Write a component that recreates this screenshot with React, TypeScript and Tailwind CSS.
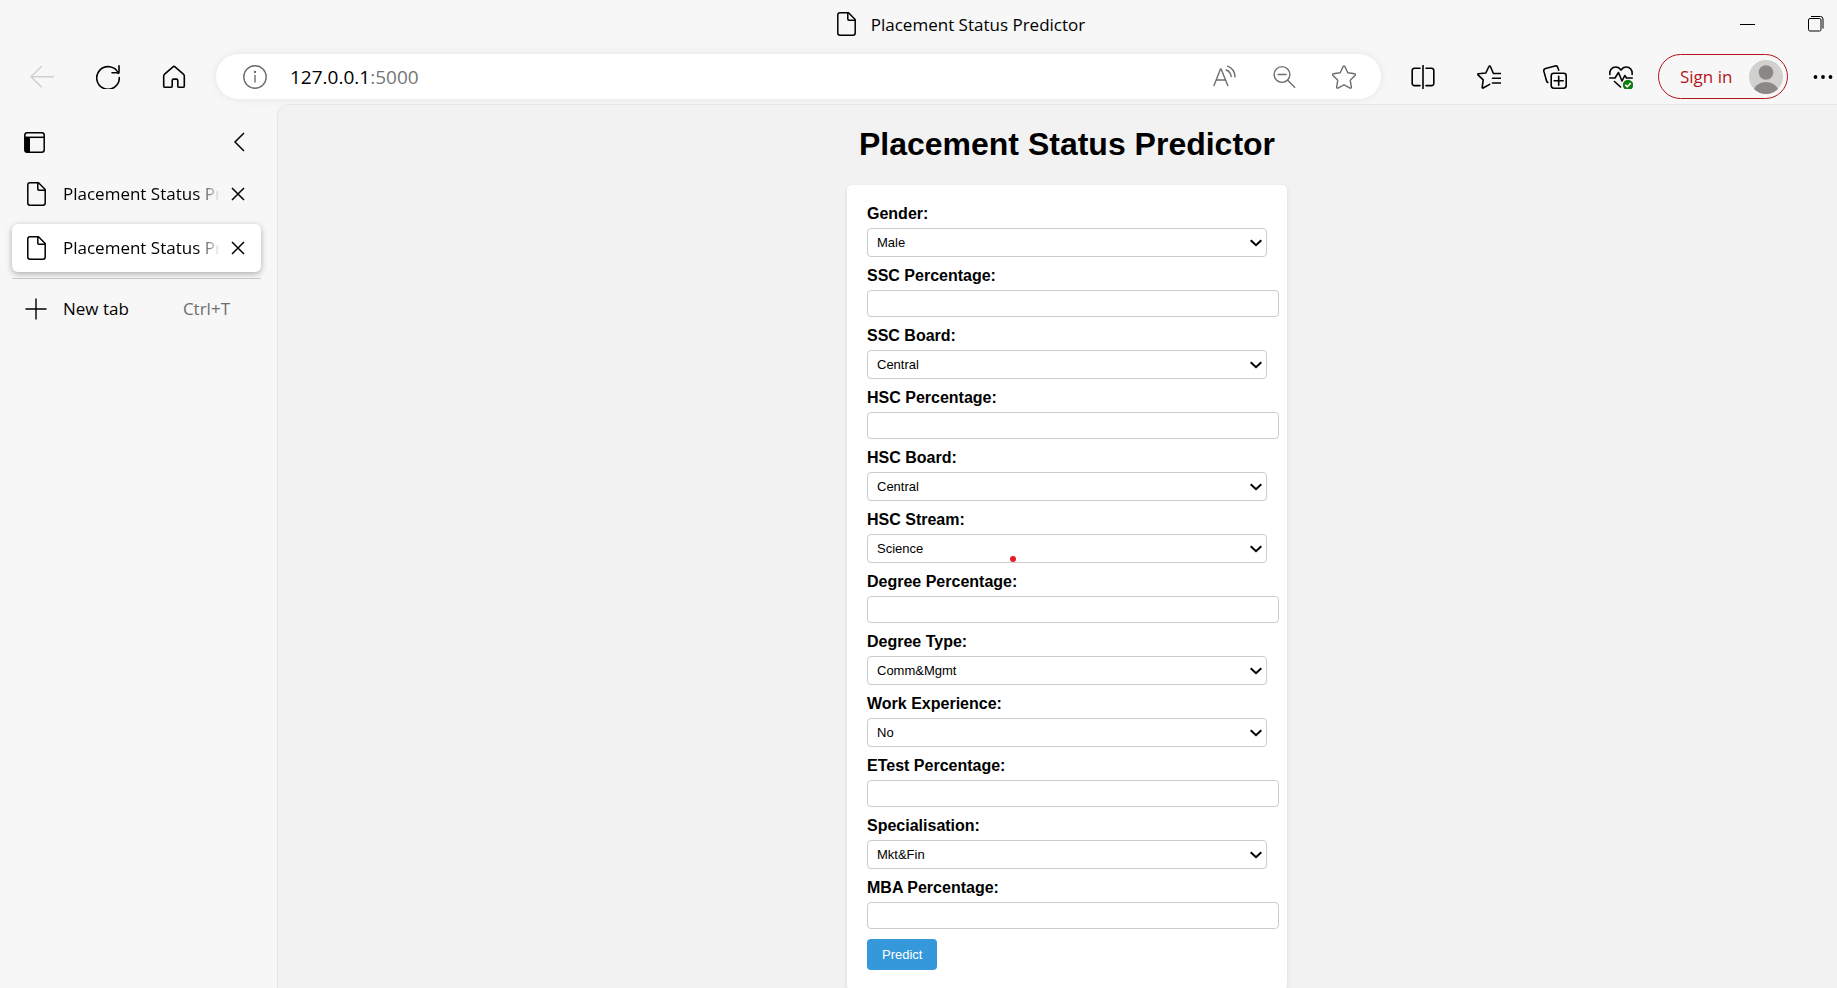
import React from "react";

type Field =
  | { kind: "select"; id: string; label: string; options: string[] }
  | { kind: "number"; id: string; label: string };

const fields: Field[] = [
  { kind: "select", id: "gender", label: "Gender:", options: ["Male", "Female"] },
  { kind: "number", id: "ssc_p", label: "SSC Percentage:" },
  { kind: "select", id: "ssc_b", label: "SSC Board:", options: ["Central", "Others"] },
  { kind: "number", id: "hsc_p", label: "HSC Percentage:" },
  { kind: "select", id: "hsc_b", label: "HSC Board:", options: ["Central", "Others"] },
  { kind: "select", id: "hsc_s", label: "HSC Stream:", options: ["Science", "Commerce", "Arts"] },
  { kind: "number", id: "degree_p", label: "Degree Percentage:" },
  { kind: "select", id: "degree_t", label: "Degree Type:", options: ["Comm&Mgmt", "Sci&Tech", "Others"] },
  { kind: "select", id: "workex", label: "Work Experience:", options: ["No", "Yes"] },
  { kind: "number", id: "etest_p", label: "ETest Percentage:" },
  { kind: "select", id: "specialisation", label: "Specialisation:", options: ["Mkt&Fin", "Mkt&HR"] },
  { kind: "number", id: "mba_p", label: "MBA Percentage:" },
];

function Icon({
  children,
  className = "h-6 w-6",
  width = 1.4,
}: {
  children: React.ReactNode;
  className?: string;
  width?: number;
}) {
  return (
    <svg
      viewBox="0 0 24 24"
      className={className}
      fill="none"
      stroke="currentColor"
      strokeWidth={width}
      strokeLinecap="round"
      strokeLinejoin="round"
      aria-hidden="true"
    >
      {children}
    </svg>
  );
}

function PageIcon() {
  return (
    <svg
      viewBox="0 0 19 24"
      className="h-6 w-[19px] shrink-0"
      fill="none"
      stroke="currentColor"
      strokeWidth="1.5"
      strokeLinejoin="round"
      aria-hidden="true"
    >
      <path d="M3 .8h8.500l6.700 6.700V21a2.200 2.200 0 0 1-2.200 2.200H3A2.200 2.200 0 0 1 .8 21V3A2.200 2.200 0 0 1 3 .8z" />
      <path d="M10.800 .8v6.200a1.200 1.200 0 0 0 1.200 1.200h6" />
    </svg>
  );
}

function ToolButton({ label, children, className = "" }: { label: string; children: React.ReactNode; className?: string }) {
  return (
    <button type="button" aria-label={label} className={`flex h-11 w-[66px] shrink-0 items-center justify-center ${className}`}>
      {children}
    </button>
  );
}

function TitleBar() {
  return (
    <div className="flex h-[54px] items-start pl-[85px]">
      <div className="flex-1" />
      <div className="flex items-start gap-[15px] pt-3">
        <PageIcon />
        <span className="text-[17px] leading-[26px]">Placement Status Predictor</span>
      </div>
      <div className="flex flex-1 justify-end">
        <button type="button" aria-label="Minimize" className="flex h-12 w-[69px] items-center justify-center">
          <svg viewBox="0 0 15 15" className="h-[15px] w-[15px]" stroke="currentColor" aria-hidden="true">
            <path d="M0 7.500h15" />
          </svg>
        </button>
        <button type="button" aria-label="Restore" className="flex h-12 w-[55px] items-center justify-center pl-3">
          <svg viewBox="0 0 16 16" className="h-4 w-4" fill="none" stroke="currentColor" aria-hidden="true">
            <rect x=".5" y="2.500" width="12.500" height="12.500" rx="1.500" />
            <path d="M3 .5h9.500a2.500 2.500 0 0 1 2.500 2.500v9.500" />
          </svg>
        </button>
      </div>
    </div>
  );
}

function Toolbar() {
  return (
    <div className="flex h-[45px] items-center pl-[9px]">
      <ToolButton label="Back" className="text-[#cfcfcf]">
        <Icon>
          <path d="M11.500 1.500 1 11.800l10.500 10.200M1 11.800h22.500" />
        </Icon>
      </ToolButton>
      <ToolButton label="Refresh">
        <Icon width={1.6}>
          <path d="M22.400 8.500A11.300 11.300 0 1 0 23.300 12.500M23 .8v7h-7" />
        </Icon>
      </ToolButton>
      <ToolButton label="Home">
        <Icon width={1.6}>
          <path d="M11 1.800a1.500 1.500 0 0 1 2 0l8.400 7.400c.6.500.9 1.200.9 2v9.700a1.400 1.400 0 0 1-1.400 1.400h-3.700a1.400 1.400 0 0 1-1.400-1.400v-5.400a1.400 1.400 0 0 0-1.400-1.400h-2.800a1.400 1.400 0 0 0-1.400 1.400v5.400a1.400 1.400 0 0 1-1.400 1.400H3.100a1.400 1.400 0 0 1-1.400-1.400v-9.700c0-.8.300-1.500.9-2z" />
        </Icon>
      </ToolButton>
      <div className="ml-[9px] mr-[9px] flex h-[45px] min-w-0 flex-1 items-center rounded-full bg-white pl-[27px] pr-[7px] text-[#6e6e6e] shadow-[0_0_8px_rgba(0,0,0,0.08)]">
        <button type="button" aria-label="View site information" className="shrink-0">
          <Icon>
            <circle cx="12" cy="12" r="11.200" />
            <path d="M12 10.500v6.500" />
            <circle cx="12" cy="7" r=".5" fill="currentColor" />
          </Icon>
        </button>
        <a href="http://127.0.0.1:5000" className="ml-[23px] flex-1 text-[19px] leading-7 text-[#767676]">
          <span className="text-black">127.0.0.1</span>:5000
        </a>
        <button type="button" aria-label="Read aloud" className="flex w-[60px] justify-center">
          <Icon>
            <path d="M2 20.500 8.500 4h.6l6.700 16.500M4.400 15h9" />
            <path d="M15.500 1.200c4.500 1.600 7.300 5.600 7.600 10.700M14.200 5c2.900 1.100 4.600 3.400 5 6.500" />
          </Icon>
        </button>
        <button type="button" aria-label="Zoom out" className="flex w-[60px] justify-center">
          <Icon>
            <circle cx="10" cy="9.500" r="7.900" />
            <path d="m15.700 15.300 7 7M6 9.500h8" />
          </Icon>
        </button>
        <button type="button" aria-label="Add to favorites" className="flex w-[60px] justify-center">
          <Icon>
            <path d="M11.200 1.400a.9.900 0 0 1 1.600 0l3 6.400 6.900 1a.9.900 0 0 1 .5 1.500l-5 4.900 1.200 7a.9.900 0 0 1-1.300.9L12 19.800l-6.100 3.300a.9.900 0 0 1-1.300-.9l1.200-7-5-4.900a.9.900 0 0 1 .5-1.500l6.900-1z" />
          </Icon>
        </button>
      </div>
      <ToolButton label="Split screen">
        <Icon width={1.6}>
          <path d="M12 .5v23M9 3.200H3.500A2.200 2.200 0 0 0 1.200 5.400v13a2.200 2.200 0 0 0 2.300 2.200H9M15 3.200h5.500a2.200 2.200 0 0 1 2.300 2.200v13a2.200 2.200 0 0 1-2.300 2.200H15" />
        </Icon>
      </ToolButton>
      <ToolButton label="Favorites">
        <Icon width={1.6}>
          <path d="M23.500 8.500h-7.100l-3-7a.8.800 0 0 0-1.500 0L8.800 8l-7.500.8a.6.600 0 0 0-.3 1l5.200 5-1 7.500a.6.600 0 0 0 .9.700l6.600-3.600M15.500 13.200h8M15.500 18h8" />
        </Icon>
      </ToolButton>
      <ToolButton label="Collections">
        <Icon width={1.6}>
          <rect x="8.200" y="8.200" width="15" height="15" rx="2.600" />
          <path d="M15.700 11.200v9M11.200 15.700h9M4.800 17.500a3 3 0 0 1-1.400-2L.9 6.400a2.400 2.400 0 0 1 1.700-2.900L12 1a2.400 2.400 0 0 1 2.900 1.700l.8 2.500" />
        </Icon>
      </ToolButton>
      <ToolButton label="Browser essentials">
        <Icon width={1.6}>
          <path d="M.9 9.500C.3 5 3.200 2 6.800 2c2 0 3.800 1 5.200 3 1.400-2 3.200-3 5.200-3 3.600 0 6.500 3 5.900 7.500M.8 13h5.200l3.500-5.500 3.500 8.500 2.800-5.500 1.700 2.500h5.700M5.500 16.500l6 5.500" />
          <circle cx="19" cy="20" r="5.200" fill="#107c10" stroke="none" />
          <path d="m16.700 20.200 1.600 1.600 3-3.200" stroke="white" />
        </Icon>
      </ToolButton>
      <button
        type="button"
        className="ml-1 flex h-[45px] w-[130px] shrink-0 items-center justify-between rounded-full border border-[#b3151b] pl-[21px] pr-1 text-[17px] text-[#b3151b]"
      >
        Sign in
        <svg viewBox="0 0 34 34" className="h-[34px] w-[34px]" aria-hidden="true">
          <clipPath id="avatar">
            <circle cx="17" cy="17" r="17" />
          </clipPath>
          <circle cx="17" cy="17" r="17" fill="#d2d0ce" />
          <g clipPath="url(#avatar)" fill="#8a8886">
            <circle cx="17" cy="12.500" r="7.300" />
            <ellipse cx="17" cy="32" rx="12.500" ry="10" />
          </g>
        </svg>
      </button>
      <button type="button" aria-label="Settings and more" className="flex h-11 w-[49px] shrink-0 items-center justify-end pr-1">
        <svg viewBox="0 0 20 4" className="h-1 w-5" fill="currentColor" aria-hidden="true">
          <circle cx="2.500" cy="2" r="1.900" />
          <circle cx="10" cy="2" r="1.900" />
          <circle cx="17.500" cy="2" r="1.900" />
        </svg>
      </button>
    </div>
  );
}

function TabItem({ active = false }: { active?: boolean }) {
  return (
    <div
      className={
        active
          ? "flex h-12 items-center rounded-md bg-white pl-[15px] pr-4 shadow-[0_2px_6px_rgba(0,0,0,0.3)]"
          : "flex h-12 items-center pl-[15px] pr-4"
      }
    >
      <PageIcon />
      <span className="ml-[17px] min-w-0 flex-1 overflow-hidden whitespace-nowrap text-[17px] leading-[26px] [mask-image:linear-gradient(to_right,black_85%,transparent)]">
        Placement Status Predictor
      </span>
      <button type="button" aria-label="Close tab" className="ml-[11px]">
        <svg viewBox="0 0 14 14" className="h-[14px] w-[14px]" fill="none" stroke="currentColor" strokeWidth="1.500" aria-hidden="true">
          <path d="m1 1 12 12M13 1 1 13" />
        </svg>
      </button>
    </div>
  );
}

function Sidebar() {
  return (
    <aside className="w-[277px] shrink-0 pl-3 pr-4">
      <div className="flex h-[66px] items-center justify-between pl-3 pr-4 pt-[10px]">
        <button type="button" aria-label="Vertical tabs">
          <svg viewBox="0 0 21 21" className="h-[21px] w-[21px]" fill="none" stroke="currentColor" strokeWidth="1.500" aria-hidden="true">
            <rect x=".8" y=".8" width="19.400" height="19.400" rx="2.500" />
            <path d="M1 5.300h19.500" />
            <path d="M1 5.300h5v14.900H3a2 2 0 0 1-2-2z" fill="currentColor" stroke="none" />
          </svg>
        </button>
        <button type="button" aria-label="Collapse pane">
          <svg viewBox="0 0 12 20" className="h-5 w-3" fill="none" stroke="currentColor" strokeWidth="1.500" aria-hidden="true">
            <path d="M11 1 2 10l9 9" />
          </svg>
        </button>
      </div>
      <div className="flex flex-col gap-[6px]">
        <TabItem />
        <TabItem active />
      </div>
      <hr className="mt-[6px] border-[#cccccc]" />
      <button type="button" className="mt-3 flex h-9 w-full items-center pl-[13px] text-[17px] leading-[26px]">
        <svg viewBox="0 0 22 22" className="h-[22px] w-[22px]" stroke="currentColor" strokeWidth="1.400" aria-hidden="true">
          <path d="M11 .5v21M.5 11h21" />
        </svg>
        <span className="ml-4">New tab</span>
        <span className="ml-auto mr-[31px] text-[#6e6e6e]">Ctrl+T</span>
      </button>
    </aside>
  );
}

function PredictorForm() {
  return (
    <form
      className="w-[440px] rounded-[5px] bg-white p-5 shadow-[0_2px_5px_rgba(0,0,0,0.1)]"
      onSubmit={(e) => e.preventDefault()}
    >
      {fields.map((f) => (
        <div key={f.id} className="relative mb-[10px]">
          <label htmlFor={f.id} className="mb-[5px] block text-base leading-[18px] font-bold">
            {f.label}
          </label>
          {f.kind === "select" ? (
            <>
              <select
                id={f.id}
                className="block h-[29px] w-full appearance-none rounded border border-[#cccccc] bg-white px-[9px] text-[13px] text-black"
              >
                {f.options.map((o) => (
                  <option key={o}>{o}</option>
                ))}
              </select>
              <svg
                viewBox="0 0 12 8"
                className="pointer-events-none absolute right-[5px] bottom-[10px] h-2 w-3"
                fill="none"
                stroke="currentColor"
                strokeWidth="2"
                aria-hidden="true"
              >
                <path d="m.7 1.200 5.300 5 5.300-5" />
              </svg>
            </>
          ) : (
            <input
              id={f.id}
              type="text"
              inputMode="decimal"
              className="block h-[27px] w-[calc(100%+12px)] rounded border border-[#cccccc] bg-white px-[5px] text-[13px]"
            />
          )}
          {f.id === "hsc_s" && <span className="absolute bottom-[1px] left-[143px] h-[6px] w-[6px] rounded-full bg-[#e81c23]" />}
        </div>
      ))}
      <button type="submit" className="block h-[31px] rounded bg-[#3498db] px-[15px] text-[13px] text-white">
        Predict
      </button>
    </form>
  );
}

export default function App() {
  return (
    <div className="flex h-screen flex-col overflow-hidden bg-[#f7f7f7] font-['Open_Sans','Noto_Sans',sans-serif] text-black">
      <header className="shrink-0 pb-[5px]">
        <TitleBar />
        <Toolbar />
      </header>
      <div className="flex min-h-0 flex-1">
        <Sidebar />
        <main className="min-w-0 flex-1 overflow-y-auto rounded-tl-xl border-l border-t border-[#e6e6e6] bg-[#f2f2f2] pl-[19px] font-['Liberation_Sans',Arial,sans-serif] [scrollbar-width:none]">
          <div className="flex flex-col items-center py-5">
            <h1 className="mb-[22px] text-[32px] leading-[38px] font-bold">Placement Status Predictor</h1>
            <PredictorForm />
          </div>
        </main>
      </div>
    </div>
  );
}
